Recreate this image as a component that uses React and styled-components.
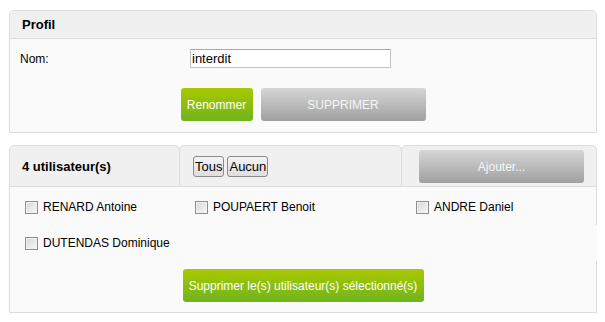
import React from "react";
import styled, { createGlobalStyle } from "styled-components";

const GlobalStyle = createGlobalStyle`
  html, body { margin: 0; padding: 0; background: #ffffff; }
  body { font-family: "Liberation Sans", Arial, sans-serif; color: #000; }
  * { box-sizing: border-box; }
`;

const Page = styled.div`
  padding: 10px 0 0 9px;
  width: 597px;
  display: flex;
  flex-direction: column;
  gap: 12px;
`;

const Panel = styled.section`
  width: 588px;
  border: 1px solid #dcdcdc;
  border-radius: 5px 5px 0 0;
  background: #fafafa;
`;

const PanelHeader = styled.div`
  height: 28px;
  padding-left: 12px;
  background: #f0f0f0;
  border-bottom: 1px solid #dcdcdc;
  border-radius: 5px 5px 0 0;
  font-weight: bold;
  font-size: 13px;
  line-height: 27px;
`;

const ProfileBody = styled.div`
  padding: 10px 10px 11px 10px;
  display: flex;
  flex-direction: column;
  gap: 20px;
`;

const FieldRow = styled.div`
  display: grid;
  grid-template-columns: 170px 201px;
  align-items: center;
  font-size: 12px;
`;

const TextInput = styled.input`
  width: 201px;
  height: 19px;
  border: 1px solid #c4c4c4;
  border-top-color: #a8a8a8;
  background: #fff;
  padding: 0 1px;
  font-family: "Liberation Sans", Arial, sans-serif;
  font-size: 13px;
  color: #000;
  outline: none;
`;

const ButtonRow = styled.div`
  display: flex;
  justify-content: center;
  gap: 8px;
`;

const ActionButton = styled.button`
  height: 33px;
  width: ${(p) => p.$w}px;
  border: none;
  border-radius: 3px;
  padding: 0;
  font-family: "Liberation Sans", Arial, sans-serif;
  font-size: 12px;
  color: ${(p) => (p.$variant === "green" ? "#ffffff" : "#f6f6f6")};
  background: ${(p) =>
    p.$variant === "green"
      ? "linear-gradient(#aac800, #6fb41e)"
      : "linear-gradient(#d6d6d6, #a0a0a2)"};
  cursor: pointer;
`;

const UsersPanel = styled.section`
  width: 588px;
  display: flex;
  flex-direction: column;
`;

const HeaderCells = styled.div`
  display: flex;
  height: 42px;
`;

const HeaderCell = styled.div`
  width: ${(p) => p.$w}px;
  margin-left: ${(p) => (p.$first ? 0 : -1)}px;
  border: 1px solid #dcdcdc;
  border-radius: 5px 5px 0 0;
  background: #f0f0f0;
  display: flex;
  align-items: ${(p) => p.$align || "center"};
  padding: ${(p) => p.$pad || "0 0 0 12px"};
`;

const HeaderTitle = styled.span`
  font-weight: bold;
  font-size: 13px;
`;

const MiniButtons = styled.div`
  display: flex;
  gap: 3px;
`;

const MiniButton = styled.button`
  height: 21px;
  padding: 0 1px;
  border: 1px solid #8a8a8a;
  border-radius: 3px;
  background: linear-gradient(#f4f4f4, #dedede);
  font-family: "Liberation Sans", Arial, sans-serif;
  font-size: 13px;
  color: #000;
  line-height: 19px;
`;

const UsersBody = styled.div`
  border: 1px solid #dcdcdc;
  border-top: none;
  background: #fafafa;
  display: flex;
  flex-direction: column;
  padding: 2px 0 10px;
`;

const UserRow = styled.div`
  display: grid;
  grid-template-columns: 170px 221px 195px;
  height: 36px;
  align-items: center;
  background: #fafafa;
  margin-right: ${(p) => (p.$overlap ? -1 : 0)}px;
  position: relative;
`;

const UserCell = styled.label`
  display: flex;
  align-items: center;
  gap: 5px;
  padding-left: 15px;
  font-size: 12px;
`;

const Check = styled.input`
  appearance: none;
  margin: 0;
  width: 13px;
  height: 13px;
  border: 1px solid #8e8e8e;
  background: linear-gradient(135deg, #d8d8d8, #f7f7f7);
  box-shadow: inset 0 0 0 1px #f2f2f2;
`;

const BottomRow = styled.div`
  display: flex;
  justify-content: center;
  margin-top: 8px;
`;

const users = [
  ["RENARD Antoine", "POUPAERT Benoit", "ANDRE Daniel"],
  ["DUTENDAS Dominique"],
];

export default function App() {
  return (
    <>
      <GlobalStyle />
      <Page>
        <Panel>
          <PanelHeader>Profil</PanelHeader>
          <ProfileBody>
            <FieldRow>
              <span>Nom:</span>
              <TextInput defaultValue="interdit" />
            </FieldRow>
            <ButtonRow>
              <ActionButton $variant="green" $w={72}>Renommer</ActionButton>
              <ActionButton $variant="gray" $w={165}>SUPPRIMER</ActionButton>
            </ButtonRow>
          </ProfileBody>
        </Panel>

        <UsersPanel>
          <HeaderCells>
            <HeaderCell $first $w={171}>
              <HeaderTitle>4 utilisateur(s)</HeaderTitle>
            </HeaderCell>
            <HeaderCell $w={223} $pad="0 0 0 13px">
              <MiniButtons>
                <MiniButton>Tous</MiniButton>
                <MiniButton>Aucun</MiniButton>
              </MiniButtons>
            </HeaderCell>
            <HeaderCell $w={196} $align="flex-start" $pad="4px 0 0 17px">
              <ActionButton $variant="gray" $w={165}>Ajouter...</ActionButton>
            </HeaderCell>
          </HeaderCells>
          <UsersBody>
            {users.map((row, i) => (
              <UserRow key={i} $overlap={i === 1}>
                {row.map((name) => (
                  <UserCell key={name}>
                    <Check type="checkbox" />
                    {name}
                  </UserCell>
                ))}
              </UserRow>
            ))}
            <BottomRow>
              <ActionButton $variant="green" $w={241}>
                Supprimer le(s) utilisateur(s) sélectionné(s)
              </ActionButton>
            </BottomRow>
          </UsersBody>
        </UsersPanel>
      </Page>
    </>
  );
}
